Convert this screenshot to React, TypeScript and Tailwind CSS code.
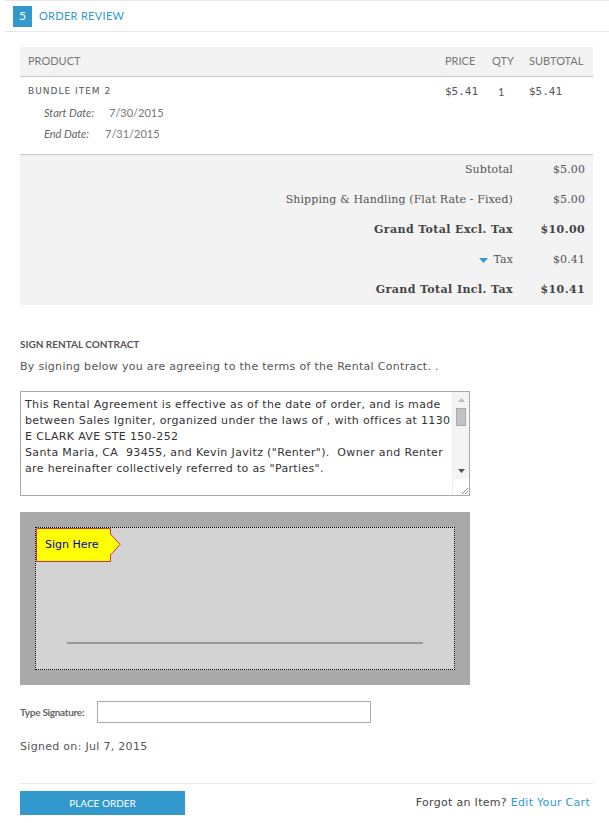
import React from 'react';

const sans = { fontFamily: 'Lato, "Open Sans", sans-serif' };

export default function App() {
  const totals = [
    { label: 'Subtotal', value: '$5.00' },
    { label: 'Shipping & Handling (Flat Rate - Fixed)', value: '$5.00' },
    { label: 'Grand Total Excl. Tax', value: '$10.00', bold: true },
    { label: 'Tax', value: '$0.41', tax: true },
    { label: 'Grand Total Incl. Tax', value: '$10.41', bold: true },
  ];

  const contract = [
    'This Rental Agreement is effective as of the date of order, and is made',
    'between Sales Igniter, organized under the laws of , with offices at 1130',
    'E CLARK AVE STE 150-252',
    'Santa Maria, CA  93455, and Kevin Javitz ("Renter").  Owner and Renter',
    'are hereinafter collectively referred to as "Parties".',
    ' ',
    'The Owner agrees to rent the equipment to the Renter for the rental term.',
  ];

  return (
    <div className="w-[609px] min-h-[823px] bg-white text-[#555] font-['DejaVu_Sans',sans-serif]">
      {/* step header */}
      <div className="ml-[5px] h-[32px] border-t border-b border-[#e6e6e6] flex items-center pl-2 gap-[7px]">
        <div className="w-[19px] h-[21px] bg-[#3399cc] text-white text-[12px] flex items-center justify-center" style={sans}>
          5
        </div>
        <div className="text-[#3399cc] text-[11px] tracking-[0.3px]" style={sans}>ORDER REVIEW</div>
      </div>

      <div className="mx-[20px] w-[573px]">
        {/* table header */}
        <div className="mt-[15px] h-[30px] bg-[#f3f3f3] border-b border-[#c8c8c8] flex items-center text-[11px] text-[#777]" style={sans}>
          <div className="flex-1 pl-2">PRODUCT</div>
          <div className="w-[47px]">PRICE</div>
          <div className="w-[37px]">QTY</div>
          <div className="w-[64px]">SUBTOTAL</div>
        </div>

        {/* item row */}
        <div className="flex pt-[4px] pb-[10px] text-[11px] leading-[21px] text-[#555]">
          <div className="flex-1 pl-2">
            <div className="text-[9px] tracking-[1px]">BUNDLE ITEM 2</div>
            <div className="pl-4 text-[#777] flex" style={sans}>
              <span className="italic text-[#666] w-[65px]">Start Date:</span>
              <span>7/30/2015</span>
            </div>
            <div className="pl-4 text-[#777] flex" style={sans}>
              <span className="italic text-[#666] w-[61px]">End Date:</span>
              <span>7/31/2015</span>
            </div>
          </div>
          <div className="w-[47px] font-['DejaVu_Sans_Mono',monospace] text-[11px]">$5.41</div>
          <div className="w-[37px] pl-[6px]" style={sans}>1</div>
          <div className="w-[64px] font-['DejaVu_Sans_Mono',monospace] text-[11px]">$5.41</div>
        </div>

        {/* totals */}
        <div className="border-t border-[#c8c8c8] bg-[#f3f3f3] font-['DejaVu_Serif',serif] text-[11px] text-[#555]">
          {totals.map((t) => (
            <div
              key={t.label}
              className={`h-[30px] flex items-center ${t.bold ? 'font-bold text-[#444] tracking-[0.4px]' : 'tracking-[0.1px]'}`}
            >
              <div className="flex-1 text-right flex items-center justify-end gap-[5px]">
                {t.tax && (
                  <svg width="9" height="5" viewBox="0 0 9 5">
                    <polygon points="0,0 9,0 4.5,5" fill="#3399cc" />
                  </svg>
                )}
                <span>{t.label}</span>
              </div>
              <div className="w-[80px] text-right pr-2">{t.value}</div>
            </div>
          ))}
        </div>

        {/* sign contract */}
        <div className="mt-[32px] text-[10px] font-bold leading-[14px] text-[#555]" style={sans}>
          SIGN RENTAL CONTRACT
        </div>
        <div className="mt-[8px] text-[11px] leading-[16px] tracking-[0.3px] text-[#555]">
          By signing below you are agreeing to the terms of the Rental Contract. .
        </div>

        <div className="mt-[16px] w-[450px] h-[105px] border border-[#aaa] flex overflow-hidden bg-white">
          <div className="flex-1 pl-[4px] pt-[5px] text-[11px] leading-[16px] tracking-[0.35px] text-[#333] whitespace-pre overflow-hidden">
            {contract.map((l, i) => (
              <div key={i}>{l}</div>
            ))}
          </div>
          <div className="w-[17px] flex flex-col bg-[#f4f4f4] border-l border-[#eee]">
            <div className="h-[16px] flex items-center justify-center">
              <svg width="7" height="4" viewBox="0 0 7 4"><polygon points="0,4 7,4 3.5,0" fill="#bbb" /></svg>
            </div>
            <div className="mx-[3px] h-[18px] bg-[#c2c2c2] border border-[#aaa]" />
            <div className="flex-1" />
            <div className="h-[16px] flex items-center justify-center">
              <svg width="7" height="4" viewBox="0 0 7 4"><polygon points="0,0 7,0 3.5,4" fill="#555" /></svg>
            </div>
            <div className="h-[16px] bg-white flex items-end justify-end">
              <svg width="8" height="8" viewBox="0 0 8 8">
                <line x1="1" y1="7" x2="7" y2="1" stroke="#888" />
                <line x1="4" y1="7" x2="7" y2="4" stroke="#888" />
              </svg>
            </div>
          </div>
        </div>

        {/* signature pad */}
        <div className="mt-[16px] w-[450px] bg-[#a9a9a9] p-[15px]">
          <div className="relative h-[143px] bg-[#d3d3d3] border border-dotted border-black">
            <div className="absolute left-0 top-0 w-[86px] h-[35px]">
              <svg width="86" height="35" viewBox="0 0 86 35" className="absolute left-0 top-0">
                <polygon points="0.5,0.5 74.5,0.5 74.5,6 84,16.5 74.5,27 74.5,33.5 0.5,33.5" fill="#ffff00" stroke="#cc3355" />
              </svg>
              <div className="absolute left-[9px] top-[9px] text-[11px] leading-[16px] text-[#0000aa]">Sign Here</div>
            </div>
            <div className="absolute left-[31px] top-[114px] w-[356px] h-[2px] bg-[#999]" />
          </div>
        </div>

        {/* typed signature */}
        <div className="mt-[16px] flex items-center">
          <span className="w-[77px] text-[10px] font-bold text-[#666] tracking-[-0.3px]" style={sans}>Type Signature:</span>
          <div className="w-[274px] h-[22px] border border-[#aaa] bg-white" />
        </div>

        <div className="mt-[16px] text-[11px] leading-[16px] tracking-[0.3px] text-[#555]">Signed on: Jul 7, 2015</div>

        <div className="mt-[28px] border-t border-[#e8e8e8] pt-[7px] flex items-center justify-between">
          <div className="w-[165px] h-[24px] bg-[#3399cc] text-white text-[10px] flex items-center justify-center" style={sans}>
            PLACE ORDER
          </div>
          <div className="text-[11px] text-[#444] tracking-[0.3px] pr-[3px]">
            Forgot an Item? <span className="text-[#3399cc]">Edit Your Cart</span>
          </div>
        </div>
      </div>
    </div>
  );
}
